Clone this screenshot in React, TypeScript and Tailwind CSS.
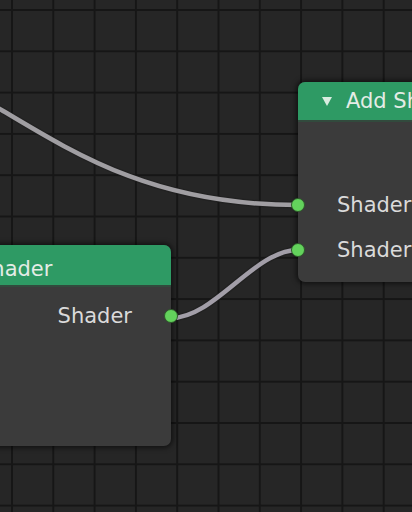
import React from "react";

function Socket({ side }: { side: "left" | "right" }) {
  return (
    <span
      className={
        side === "left"
          ? "absolute left-[-7px] top-1/2 -translate-y-1/2 w-[14px] h-[14px] rounded-full bg-[#63d25c] border border-[#2d5a2a]"
          : "absolute right-[-7px] top-1/2 -translate-y-1/2 w-[14px] h-[14px] rounded-full bg-[#63d25c] border border-[#2d5a2a]"
      }
    />
  );
}

export default function App() {
  return (
    <div className="relative w-[412px] h-[512px] overflow-hidden bg-[#262626] font-['DejaVu_Sans',sans-serif]">
      {/* grid + wires */}
      <svg className="absolute inset-0" width="412" height="512" viewBox="0 0 412 512">
        <defs>
          <pattern id="grid" x="11" y="9" width="41.3" height="41.3" patternUnits="userSpaceOnUse">
            <rect x="0" y="0" width="2" height="41.3" fill="#161616" />
            <rect x="0" y="0" width="41.3" height="2" fill="#161616" />
          </pattern>
        </defs>
        <rect x="0" y="0" width="412" height="512" fill="url(#grid)" />
        <path d="M -288 19 C -12 19, 22 205, 298 205" fill="none" stroke="#1c1c1c" strokeWidth="7" opacity="0.5" />
        <path d="M -288 19 C -12 19, 22 205, 298 205" fill="none" stroke="#a09ea2" strokeWidth="4.5" />
        <path d="M 171 318 C 215 318, 254 250, 298 250" fill="none" stroke="#1c1c1c" strokeWidth="7" opacity="0.5" />
        <path d="M 171 318 C 215 318, 254 250, 298 250" fill="none" stroke="#a29ea8" strokeWidth="4.5" />
      </svg>

      {/* Add Shader node */}
      <div className="absolute left-[298px] top-[82px] w-[220px] h-[200px] rounded-[7px] bg-[#3b3b3b] shadow-[0_0_5px_2px_rgba(0,0,0,0.55)] flex flex-col">
        <div className="h-[40px] rounded-t-[7px] bg-[#2e9a64] flex items-center pl-[24px] gap-[14px] border-b-2 border-[#324a3d]">
          <span className="w-0 h-0 border-l-[5px] border-r-[5px] border-t-[9px] border-l-transparent border-r-transparent border-t-[#d9ece0]" />
          <span className="text-[21px] leading-[24px] text-[#e4ece6] whitespace-nowrap">Add Shader</span>
        </div>
        <div className="pt-[60px] flex flex-col">
          <div className="relative h-[45px] flex items-center pl-[39px]">
            <Socket side="left" />
            <span className="text-[21px] leading-[24px] text-[#dadada]">Shader</span>
          </div>
          <div className="relative h-[45px] flex items-center pl-[39px]">
            <Socket side="left" />
            <span className="text-[21px] leading-[24px] text-[#dadada]">Shader</span>
          </div>
        </div>
      </div>

      {/* Left shader node */}
      <div className="absolute left-[-120px] top-[245px] w-[291px] h-[201px] rounded-[7px] bg-[#3b3b3b] shadow-[0_0_5px_2px_rgba(0,0,0,0.55)] flex flex-col">
        <div className="h-[42px] rounded-t-[7px] bg-[#2e9a64] pl-[98px] pt-[12px] border-b-2 border-[#324a3d]">
          <span className="text-[21px] leading-[24px] text-[#e4ece6] whitespace-nowrap block">Shader</span>
        </div>
        <div className="pt-[7px] flex flex-col">
          <div className="relative h-[44px] flex items-center justify-end pr-[39px]">
            <span className="text-[21px] leading-[24px] text-[#dadada]">Shader</span>
            <Socket side="right" />
          </div>
        </div>
      </div>
    </div>
  );
}
